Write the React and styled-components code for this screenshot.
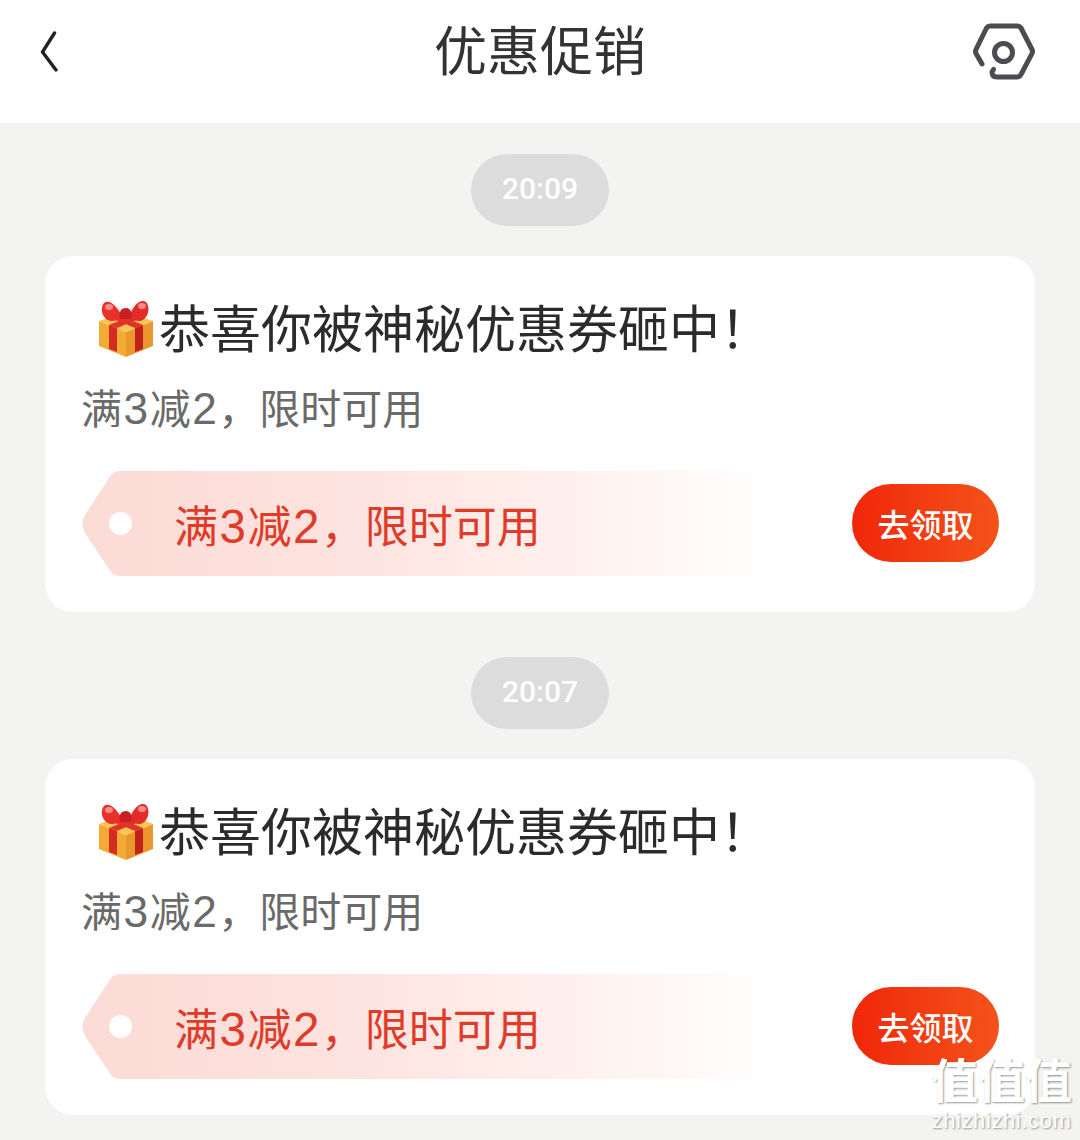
import React from "react";
import styled, { createGlobalStyle } from "styled-components";

const Global = createGlobalStyle`
  html, body { margin: 0; padding: 0; background: #f3f3f1; }
  body { font-family: "Liberation Sans", "Noto Sans CJK SC", sans-serif; }
`;

const Page = styled.div`
  position: relative;
  width: 1080px;
  height: 1140px;
  overflow: hidden;
  background: #f3f3f1;
`;

const Header = styled.header`
  height: 123px;
  background: #fff;
  display: grid;
  grid-template-columns: 1fr auto 1fr;
  align-items: center;
  padding: 0 45px 24px;
  box-sizing: border-box;
  & > svg:first-child { margin-left: -9px; }
  & > svg:last-child { justify-self: end; }
`;

const Title = styled.h1`
  margin: 3px 0 0;
  font-size: 53px;
  line-height: 100px;
  font-weight: 400;
  color: #333;
`;

const Feed = styled.main`
  display: flex;
  flex-direction: column;
  align-items: center;
  padding-top: 31px;
`;

const TimePill = styled.div`
  width: 138px;
  height: 72px;
  border-radius: 36px;
  background: #dcdcdc;
  color: #fff;
  font-family: Roboto, sans-serif;
  font-size: 30px;
  font-weight: 500;
  padding-bottom: 3px;
  box-sizing: border-box;
  display: flex;
  align-items: center;
  justify-content: center;
`;

const Card = styled.section`
  box-sizing: border-box;
  width: 990px;
  height: 356px;
  margin: 30px 0 45px;
  padding: 37px 36px 0;
  background: #fff;
  border-radius: 28px;
`;

const CardTitle = styled.div`
  display: flex;
  align-items: center;
  height: 66px;
  padding-left: 16px;
  font-size: 51px;
  color: #2b2b2b;
  white-space: nowrap;
`;

const Num = styled.span`
  font-size: 1.08em;
  padding: 0 1.5px;
`;

const Subtitle = styled.div`
  margin-top: 23px;
  height: 54px;
  line-height: 54px;
  font-size: 41px;
  color: #6a6a6a;
  white-space: nowrap;
`;

const CouponRow = styled.div`
  display: flex;
  align-items: flex-start;
  justify-content: space-between;
  margin-top: 35px;
`;

const Tag = styled.div`
  width: 700px;
  height: 105px;
  margin-left: -1px;
  display: flex;
  align-items: center;
  gap: 42px;
  padding-left: 29px;
  box-sizing: border-box;
  background: linear-gradient(90deg, #fbdbd6 0%, #fde2de 35%, #fff0ed 70%, #ffffff 100%);
  clip-path: path("M40 0 H700 V105 H40 Q35 105 31 101 L5 62 Q0 52 5 44 L31 4 Q35 0 40 0 Z");
`;

const Hole = styled.span`
  width: 23px;
  height: 23px;
  border-radius: 50%;
  background: #fff;
  flex: none;
`;

const TagText = styled.span`
  font-size: 44px;
  color: #e03a28;
  white-space: nowrap;
`;

const ClaimButton = styled.button`
  width: 147px;
  height: 78px;
  margin-top: 13px;
  padding: 0;
  border: 0;
  border-radius: 39px;
  background: linear-gradient(90deg, #f0270a 0%, #f4531a 100%);
  color: #fff;
  font-family: inherit;
  font-size: 32px;
  font-weight: 500;
`;

const Watermark = styled.div`
  position: absolute;
  right: 8px;
  bottom: 7px;
  display: flex;
  flex-direction: column;
  align-items: center;
  color: #fff;
  text-shadow: 1px 1px 2px rgba(0, 0, 0, 0.4);
`;

const WatermarkGlyphs = styled.div`
  font-size: 47px;
  line-height: 54px;
  font-weight: 700;
  white-space: nowrap;
`;

const WatermarkUrl = styled.div`
  font-size: 22px;
  line-height: 24px;
  letter-spacing: 0.6px;
`;

const BackIcon = () => (
  <svg width="24" height="42" viewBox="0 0 24 42" fill="none">
    <path d="M18.5 2 L6.5 21 L20 39" stroke="#222" strokeWidth="3.4" strokeLinecap="round" strokeLinejoin="round" />
  </svg>
);

const HexIcon = () => (
  <svg width="62" height="58" viewBox="974 21 62 58" fill="none">
    <path
      d="M983 62 L977 51.5 Q976 49.5 977 47.5 L987.5 26 Q989 24 991 24 H1018 Q1020.5 24 1022 26 L1033 47.5 Q1034 49.5 1033 51.5 L1022 72.5 Q1020.5 75 1018 75 H998 Q993 75 993 70 L994.5 67.5"
      stroke="#4a4c50"
      strokeWidth="5"
      strokeLinecap="round"
      strokeLinejoin="round"
    />
    <circle cx="1004.5" cy="50.5" r="9" stroke="#4a4c50" strokeWidth="5" />
  </svg>
);

const GiftSvg = styled.svg`
  flex: none;
  margin: 5px 4px 0 0;
`;

const GiftIcon = () => (
  <GiftSvg width="58" height="58" viewBox="0 0 58 58" fill="none">
    <path d="M2 21 L29 32 V57 L2 46 Z" fill="#f4ab35" />
    <path d="M56 21 L29 32 V57 L56 46 Z" fill="#e8982c" />
    <path d="M2 21 L29 11 L56 21 L29 32 Z" fill="#fbc456" />
    <path d="M12 25 L20 28 V52 L12 49 Z" fill="#d62a20" />
    <path d="M46 25 L38 28 V52 L46 49 Z" fill="#c4201c" />
    <path d="M12 25 L39 14 L46 17 L20 28 Z" fill="#e0332a" />
    <path d="M46 25 L19 14 L12 17 L38 28 Z" fill="#e0332a" />
    <path d="M27 20 C20 4 11 -1 7 3 C2 9 6 20 14 21 Z" fill="#e9302c" />
    <path d="M31 20 C35 5 44 -2 49 2 C54 8 51 19 43 21 Z" fill="#e32b2a" />
    <path d="M23 19 C21 11 25 8 29 8 C33 8 36 12 34 19 Z" fill="#c8201f" />
    <ellipse cx="12" cy="7" rx="4" ry="3" fill="#f78d88" />
    <ellipse cx="45" cy="6" rx="4" ry="3" fill="#f78d88" />
  </GiftSvg>
);

const Offer = () => (
  <>
    满<Num>3</Num>减<Num>2</Num>，限时可用
  </>
);

const Message = ({ time }) => (
  <>
    <TimePill>{time}</TimePill>
    <Card>
      <CardTitle>
        <GiftIcon />
        恭喜你被神秘优惠券砸中！
      </CardTitle>
      <Subtitle>
        <Offer />
      </Subtitle>
      <CouponRow>
        <Tag>
          <Hole />
          <TagText>
            <Offer />
          </TagText>
        </Tag>
        <ClaimButton>去领取</ClaimButton>
      </CouponRow>
    </Card>
  </>
);

export default function App() {
  return (
    <Page>
      <Global />
      <Header>
        <BackIcon />
        <Title>优惠促销</Title>
        <HexIcon />
      </Header>
      <Feed>
        <Message time="20:09" />
        <Message time="20:07" />
      </Feed>
      <Watermark>
        <WatermarkGlyphs>值值值</WatermarkGlyphs>
        <WatermarkUrl>zhizhizhi.com</WatermarkUrl>
      </Watermark>
    </Page>
  );
}
